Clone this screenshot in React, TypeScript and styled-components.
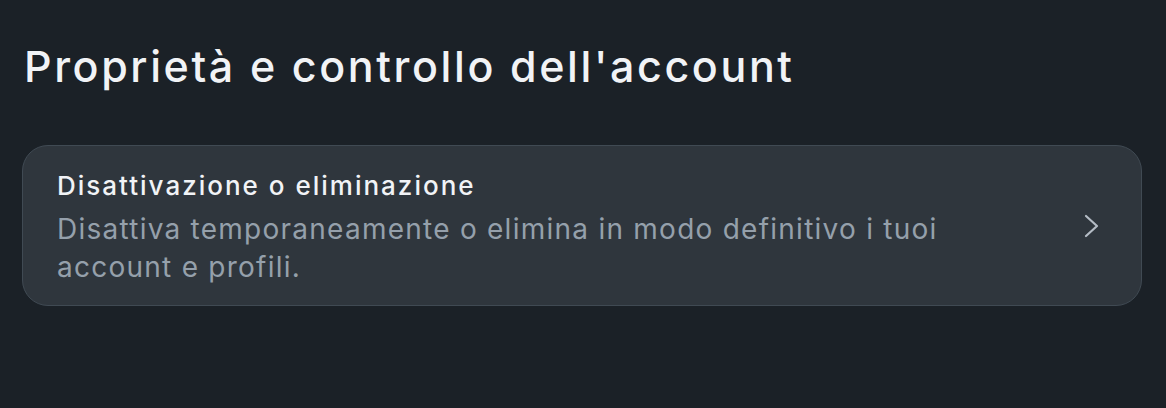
import React from 'react';
import styled, { createGlobalStyle } from 'styled-components';

const GlobalStyle = createGlobalStyle`
    html, body {
        margin: 0;
        padding: 0;
        background: #1b2127;
    }
    body {
        font-family: Inter, 'Noto Sans', sans-serif;
        color: #f1f3f6;
    }
`;

const App = () => {
    return (
        <>
            <GlobalStyle />
            <Page>
                <Heading>Proprietà e controllo dell'account</Heading>
                <Card>
                    <CardText>
                        <CardTitle>Disattivazione o eliminazione</CardTitle>
                        <CardDescription>
                            Disattiva temporaneamente o elimina in modo definitivo i tuoi account e profili.
                        </CardDescription>
                    </CardText>
                    <Chevron viewBox="0 0 16 24" aria-hidden="true">
                        <path d="M2 2 L13 12 L2 22" />
                    </Chevron>
                </Card>
            </Page>
        </>
    );
};

export default App;

const Page = styled.div`
    width: 1166px;
    height: 408px;
    box-sizing: border-box;
    padding: 38px 24px 0 22px;
    display: flex;
    flex-direction: column;
`;

const Heading = styled.h1`
    margin: 0 0 0 2px;
    font-size: 43px;
    font-weight: 500;
    line-height: 56px;
    letter-spacing: 2.6px;
    color: #f1f3f6;
`;

const Card = styled.div`
    margin-top: 51px;
    width: 1120px;
    height: 161px;
    box-sizing: border-box;
    padding: 4px 41px 0 34px;
    display: flex;
    align-items: center;
    justify-content: space-between;
    background: #2f363d;
    border: 1.5px solid #404a53;
    border-radius: 26px;
`;

const CardText = styled.div`
    width: 920px;
    display: flex;
    flex-direction: column;
`;

const CardTitle = styled.div`
    font-size: 26px;
    font-weight: 500;
    line-height: 32px;
    letter-spacing: 2px;
    color: #f1f3f6;
    margin-bottom: 8px;
`;

const CardDescription = styled.div`
    font-size: 28px;
    font-weight: 400;
    line-height: 38px;
    letter-spacing: 1.25px;
    color: #95a0ab;
`;

const Chevron = styled.svg`
    width: 16px;
    height: 24px;
    margin-top: -4px;
    fill: none;
    stroke: #b4bcc5;
    stroke-width: 2.2;
    stroke-linecap: round;
    stroke-linejoin: round;
`;
